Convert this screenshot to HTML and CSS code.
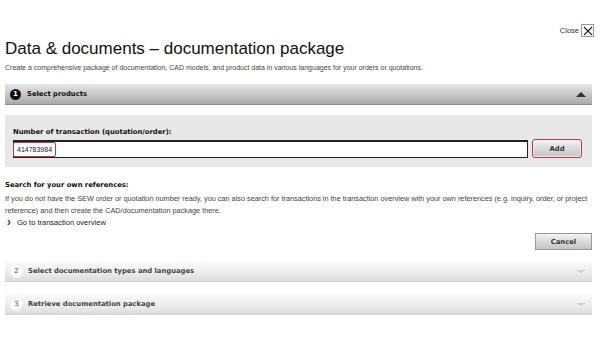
FILE: index.html
```html
<!DOCTYPE html>
<html lang="en">
<head>
    <meta charset="UTF-8">
    <meta name="viewport" content="width=device-width, initial-scale=1.0">
    <title>Data &amp; documents</title>
<link rel="stylesheet" href="styles.css">
</head>
<body>
    <div class="page">
        <div class="close-line">
            <span>Close</span>
            <span class="close-box">
                <svg width="10" height="10" viewBox="0 0 10 10"><path d="M1 1 L9 9 M9 1 L1 9" stroke="#222" stroke-width="1.1" fill="none"/></svg>
            </span>
        </div>
        <h1 class="title">Data &amp; documents &ndash; documentation package</h1>
        <p class="intro">Create a comprehensive package of documentation, CAD models, and product data in various languages for your orders or quotations.</p>

        <div class="step step-open">
            <span class="step-num">1</span>
            <span class="step-title">Select products</span>
            <span class="step-arrow up"></span>
        </div>

        <div class="entry-panel">
            <div class="entry-label">Number of transaction (quotation/order):</div>
            <div class="entry-row">
                <div class="entry-input"><span class="entry-value">414783984</span></div>
                <button class="btn btn-add">Add</button>
            </div>
        </div>

        <div class="refs">
            <div class="refs-title">Search for your own references:</div>
            <p class="refs-text">If you do not have the SEW order or quotation number ready, you can also search for transactions in the transaction overview with your own references (e.g. inquiry, order, or project reference) and then create the CAD/documentation package there.</p>
            <a class="refs-link" href="#"><span class="chev">&#8250;</span>Go to transaction overview</a>
        </div>

        <div class="cancel-line">
            <button class="btn btn-cancel">Cancel</button>
        </div>

        <div class="step step-closed">
            <span class="step-num">2</span>
            <span class="step-title">Select documentation types and languages</span>
            <span class="step-arrow down"></span>
        </div>
        <div class="step step-closed">
            <span class="step-num">3</span>
            <span class="step-title">Retrieve documentation package</span>
            <span class="step-arrow down"></span>
        </div>
    </div>
</body>
</html>
```

FILE: styles.css
```css
body{
    margin:0;
    background:white;
    color:#222;
    font-family:"Liberation Sans", Arial, sans-serif;
}
.page{
    padding:0 8px 0 5px;
}
.close-line{
    display:flex;
    justify-content:flex-end;
    align-items:center;
    gap:2px;
    padding-top:24px;
    font-size:7.5px;
    color:#333;
    margin-right:-2px;
}
.close-box{
    display:flex;
    align-items:center;
    justify-content:center;
    width:11px;
    height:11px;
    border:1px solid #999;
}
.title{
    margin:2px 0 0 0;
    font-weight:normal;
    font-size:17px;
    color:#111;
    line-height:19px;
}
.intro{
    margin:6px 0 0 0;
    font-size:7px;
    color:#444;
}
.step{
    display:flex;
    align-items:center;
    height:20px;
    padding:0 6px 0 5px;
    font-family:"DejaVu Sans", Verdana, sans-serif;
    font-weight:bold;
    font-size:6.8px;
}
.step-open{
    margin-top:13px;
    background:linear-gradient(#e6e6e6, #c2c2c2 60%, #a9a9a9);
    border-bottom:1px solid #8e8e8e;
    color:#111;
}
.step-closed{
    margin-top:11px;
    background:linear-gradient(#fafafa, #ececec 60%, #dcdcdc);
    border-bottom:1px solid #d2d2d2;
    color:#444;
}
.step-closed + .step-closed{
    margin-top:12px;
}
.step-num{
    display:flex;
    align-items:center;
    justify-content:center;
    width:11px;
    height:11px;
    border-radius:50%;
    font-size:7px;
    margin-right:6px;
}
.step-open .step-num{
    background:#111;
    color:white;
}
.step-closed .step-num{
    background:#fafafa;
    color:#555;
    font-weight:normal;
    width:13px;
    height:13px;
    margin-right:5px;
}
.step-title{
    flex:1;
}
.step-arrow{
    width:0;
    height:0;
    border-left:5px solid transparent;
    border-right:5px solid transparent;
}
.step-arrow.up{
    border-bottom:5px solid #333;
}
.step-arrow.down{
    border-top:3px solid #d0d0d0;
}
.entry-panel{
    margin-top:10px;
    background:#e8e8e8;
    padding:13px 10px 9px 8px;
}
.entry-label{
    font-family:"DejaVu Sans", Verdana, sans-serif;
    font-weight:bold;
    font-size:6.8px;
    color:#111;
    margin-bottom:3px;
}
.entry-row{
    display:flex;
    align-items:center;
    gap:4px;
}
.entry-input{
    flex:1;
    height:15px;
    background:white;
    border:1px solid #222;
    border-top-width:2px;
    display:flex;
    align-items:center;
}
.entry-value{
    font-size:7px;
    color:#222;
    padding:3px 3px;
    border:1px solid #c0384a;
    border-radius:2px;
    margin-left:-1px;
}
.btn{
    font-family:"DejaVu Sans", Verdana, sans-serif;
    font-weight:bold;
    font-size:6.8px;
    color:#333;
    background:linear-gradient(#f4f4f4, #d8d8d8 55%, #c4c4c4);
    border:1px solid #999;
    cursor:pointer;
}
.btn-add{
    width:50px;
    height:19px;
    border:1px solid #b83a4c;
    border-radius:3px;
    box-shadow:inset 0 0 0 1px #eee;
}
.refs{
    margin-top:14px;
    font-size:7.3px;
}
.refs-title{
    font-family:"DejaVu Sans", Verdana, sans-serif;
    font-weight:bold;
    font-size:6.8px;
    color:#111;
}
.refs-text{
    margin:4px 0 0 0;
    line-height:12px;
    color:#444;
}
.refs-link{
    display:flex;
    align-items:center;
    margin-top:0;
    color:#222;
    text-decoration:none;
    font-size:7.5px;
}
.chev{
    color:#c0102a;
    font-weight:bold;
    font-size:12px;
    margin:0 6px 0 2px;
    line-height:10px;
}
.cancel-line{
    display:flex;
    justify-content:flex-end;
    margin-top:6px;
}
.btn-cancel{
    width:57px;
    height:17px;
}
```
